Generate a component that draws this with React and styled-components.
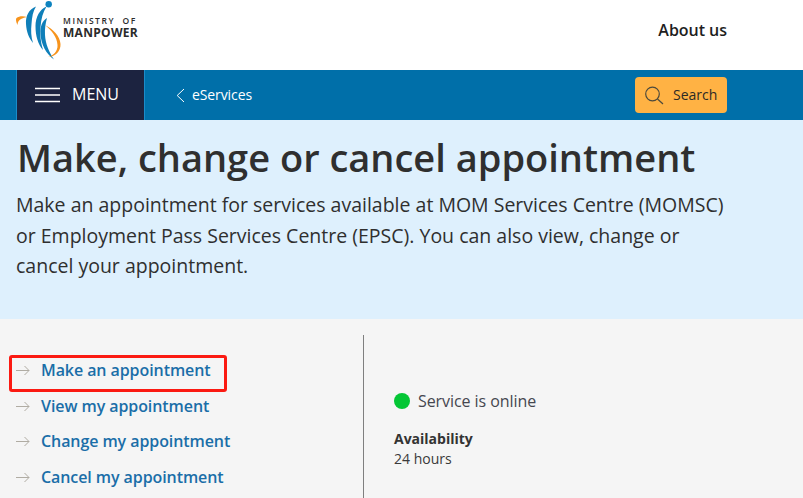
import React from "react";
import styled, { createGlobalStyle } from "styled-components";

const Global = createGlobalStyle`
  html, body { margin: 0; padding: 0; background: #f5f5f5; }
  body { font-family: "Open Sans", "Liberation Sans", sans-serif; overflow: hidden; }
  * { box-sizing: border-box; }
`;
const Page = styled.div`width: 803px; height: 498px; overflow: hidden; display: flex; flex-direction: column;`;
const Header = styled.header`
  height: 70px; flex: none; background: #fff; display: flex; align-items: flex-start; justify-content: space-between;
  padding: 0 76px 0 15px;
`;
const Brand = styled.div`display: flex; align-items: flex-start; gap: 1px;`;
const BrandText = styled.div`display: flex; flex-direction: column; padding-top: 15px; color: #2b2b2b;`;
const BrandTop = styled.span`
  font: 600 8.5px/11px "Open Sans", sans-serif; letter-spacing: 1.55px; white-space: pre;
`;
const BrandBottom = styled.span`
  font: 700 12px/14px "Open Sans", sans-serif; letter-spacing: 0.3px;
`;
const AboutLink = styled.a`
  font-size: 16px; font-weight: 600; color: #1e1e1e; line-height: 22px; margin-top: 19px; letter-spacing: -0.03px;
`;
const Nav = styled.nav`height: 50px; flex: none; background: #006fa9; display: flex; align-items: center; padding: 0 76px 0 16px;`;
const MenuButton = styled.div`
  width: 129px; height: 50px; background: #1c2340; border-left: 1px solid #1b8cc9; border-right: 1px solid #1b8cc9;
  display: flex; align-items: center; gap: 12px; padding-left: 18px; color: #fff; font-size: 16px; font-weight: 400;
`;
const NavLabel = styled.span`margin-bottom: 2px;`;
const Back = styled.div`
  display: flex; align-items: center; gap: 7px; margin-left: 31px; color: #fff; font-size: 14px; letter-spacing: -0.1px;
`;
const SearchButton = styled.div`
  margin-left: auto; width: 92px; height: 36px; border-radius: 4px; background: #ffb244;
  display: flex; align-items: center; gap: 8px; padding-left: 10px; color: #2d2a26; font-size: 14px;
`;
const Hero = styled.section`height: 199px; flex: none; background: #def0fd; padding: 12px 16px 0 16px; color: #2f2f2f;`;
const Title = styled.h1`margin: 0 0 0 1px; font-size: 38px; line-height: 50px; font-weight: 600; color: #2f2f2f; white-space: nowrap;`;
const Lead = styled.p`margin: 8px 0 0; font-size: 19.5px; line-height: 30.5px; color: #2f2f2f; width: 725px;`;
const Body = styled.main`flex: 1; display: grid; grid-template-columns: 364px 1fr; padding-top: 16px; background: #f5f5f5;`;
const LinkColumn = styled.div`border-right: 1px solid #7f7f7f; padding: 24px 0 0 16px; display: flex; flex-direction: column; gap: 12.7px;`;
const LinkRow = styled.div`position: relative; display: flex; align-items: center; gap: 11px; height: 23px;`;
const LinkText = styled.a`font-size: 16px; font-weight: 600; color: #1a6ea8; line-height: 23px; letter-spacing: -0.08px; white-space: nowrap;`;
const Highlight = styled.div`
  position: absolute; left: -7px; top: -4px; width: 218px; height: 37px; border: 3px solid #fb1a12; border-radius: 3px;
`;
const StatusColumn = styled.div`padding: 55px 0 0 30px; color: #3a3a3a;`;
const Status = styled.div`display: flex; align-items: center; gap: 8px; font-size: 16px; line-height: 22px; color: #45474f; letter-spacing: -0.07px;`;
const Dot = styled.span`width: 16px; height: 16px; border-radius: 50%; background: #04c635; flex: none;`;
const AvailLabel = styled.div`margin-top: 17px; font-size: 14px; font-weight: 700; line-height: 20px; color: #333;`;
const AvailValue = styled.div`font-size: 14px; line-height: 20px; color: #3a3a3a;`;

const Logo = () => (
  <svg width="47" height="62" viewBox="15 0 47 62" fill="none">
    <circle cx="48.700" cy="4.200" r="3.200" fill="#0d83bf" />
    <path d="M36 6.500C29 9 25.500 16 26 24C26.500 32 29 38 33 43C31 37 30.800 30 31.500 24C32 17 33 11 36 6.500Z" fill="#0f7fb9" />
    <path d="M46.500 6.500C40 9 35.500 17 35.500 26C35.500 36 38 44 43 50C40.500 42 39.800 34 40.500 27C41 19 43 12 46.500 6.500Z" fill="#0f7fb9" />
    <path d="M47 18C42 21 40 27 40.500 34C41 44 46 54 54 59.500C49 52 45.500 44 45 35C44.700 29 45.500 23 47 18Z" fill="#0f7fb9" />
    <path d="M27 17C23 15.500 19 16 16.500 18C15.500 19 16 22 17.500 25C17.500 22 19 20 21 19C23 18 25 17.500 27 17Z" fill="#f7941d" />
    <path d="M45 25C53 29 60 36 60.500 44C61 51 55 57 48 57C53 56 58 51 57.500 45C57 37 52 31 45 25Z" fill="#f7941d" />
  </svg>
);
const MenuIcon = () => (
  <svg width="25" height="16" viewBox="0 0 25 16" stroke="#fff" strokeWidth="1.600"><path d="M0 1.500H25M0 8H25M0 14.500H25" /></svg>
);
const Chevron = () => (
  <svg width="9" height="15" viewBox="0 0 9 15" fill="none" stroke="#fff" strokeWidth="1"><path d="M8 1L1.200 7.500L8 14" /></svg>
);
const SearchIcon = () => (
  <svg width="20" height="20" viewBox="0 0 20 20" fill="none" stroke="#4d4a3c" strokeWidth="1.200"><circle cx="7.500" cy="9" r="6.800" /><path d="M12.500 14L18 19" /></svg>
);
const Arrow = () => (
  <svg width="14" height="11" viewBox="0 0 14 11" fill="none" stroke="#b0aca3" strokeWidth="1"><path d="M0 5.500H13M8.500 1L13 5.500L8.500 10" /></svg>
);

const links = ["Make an appointment", "View my appointment", "Change my appointment", "Cancel my appointment"];

export default function App() {
  return (
    <Page>
      <Global />
      <Header>
        <Brand>
          <Logo />
          <BrandText>
            <BrandTop>MINISTRY  OF</BrandTop>
            <BrandBottom>MANPOWER</BrandBottom>
          </BrandText>
        </Brand>
        <AboutLink>About us</AboutLink>
      </Header>
      <Nav>
        <MenuButton><MenuIcon /><NavLabel>MENU</NavLabel></MenuButton>
        <Back><Chevron /><NavLabel>eServices</NavLabel></Back>
        <SearchButton><SearchIcon /><NavLabel>Search</NavLabel></SearchButton>
      </Nav>
      <Hero>
        <Title>Make, change or cancel appointment</Title>
        <Lead>Make an appointment for services available at MOM Services Centre (MOMSC) or Employment Pass Services Centre (EPSC). You can also view, change or cancel your appointment.</Lead>
      </Hero>
      <Body>
        <LinkColumn>
          {links.map((l, i) => (
            <LinkRow key={l}>
              {i === 0 && <Highlight />}
              <Arrow />
              <LinkText>{l}</LinkText>
            </LinkRow>
          ))}
        </LinkColumn>
        <StatusColumn>
          <Status><Dot />Service is online</Status>
          <AvailLabel>Availability</AvailLabel>
          <AvailValue>24 hours</AvailValue>
        </StatusColumn>
      </Body>
    </Page>
  );
}
